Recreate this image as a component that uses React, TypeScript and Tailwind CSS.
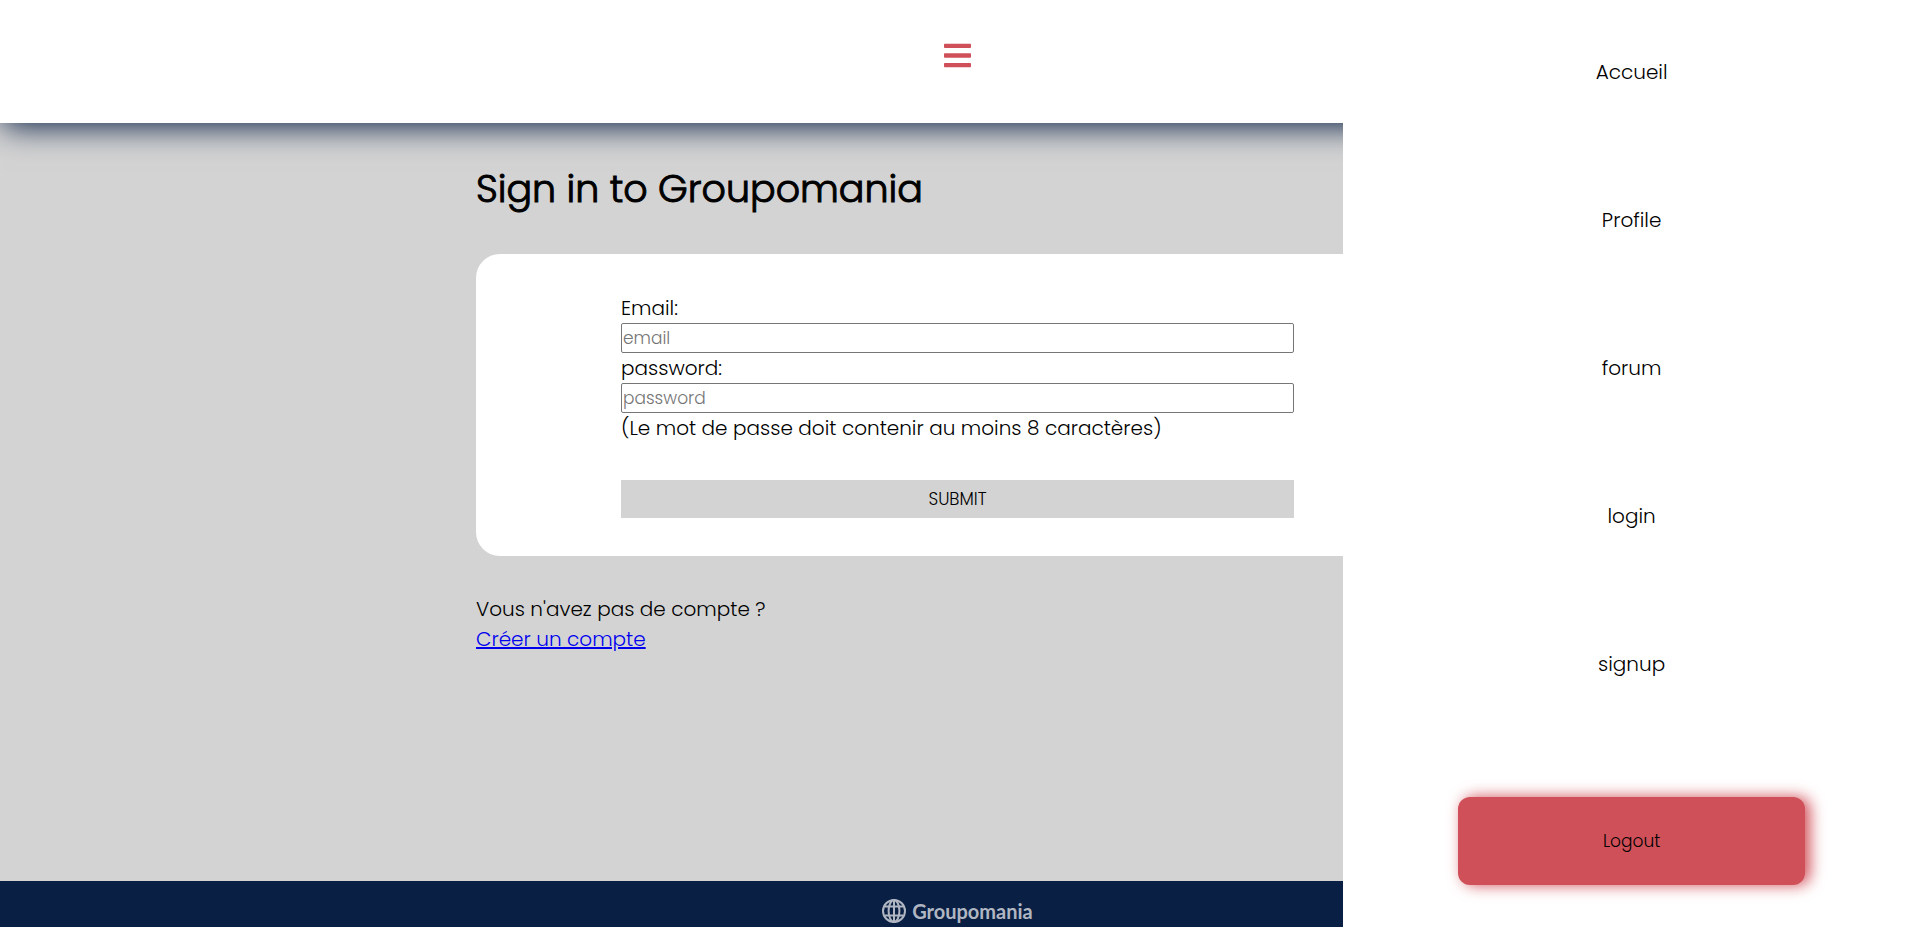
import React, { useState } from "react";

const links = [
  { label: "Accueil", href: "#accueil" },
  { label: "Profile", href: "#profile" },
  { label: "forum", href: "#forum" },
  { label: "login", href: "#login" },
  { label: "signup", href: "#signup" },
];

function BarsIcon() {
  return (
    <svg viewBox="0 0 448 512" className="h-[31px] w-[27px]" fill="currentColor" aria-hidden="true">
      <path d="M16 132h416c8.837 0 16-7.163 16-16V76c0-8.837-7.163-16-16-16H16C7.163 60 0 67.163 0 76v40c0 8.837 7.163 16 16 16zm0 160h416c8.837 0 16-7.163 16-16v-40c0-8.837-7.163-16-16-16H16c-8.837 0-16 7.163-16 16v40c0 8.837 7.163 16 16 16zm0 160h416c8.837 0 16-7.163 16-16v-40c0-8.837-7.163-16-16-16H16c-8.837 0-16 7.163-16 16v40c0 8.837 7.163 16 16 16z" />
    </svg>
  );
}

function GlobeIcon() {
  return (
    <svg viewBox="0 0 24 24" className="size-6" fill="none" stroke="currentColor" strokeWidth="2" aria-hidden="true">
      <circle cx="12" cy="12" r="11" />
      <ellipse cx="12" cy="12" rx="5.4" ry="11" />
      <path d="M12 1v22M2.6 7.5h18.8M2.6 16.5h18.8" />
    </svg>
  );
}

function Header({ onToggle }: { onToggle: () => void }) {
  return (
    <header className="relative flex justify-center bg-white pt-10 pb-[52px] pl-[3px] shadow-[3px_3px_30px_#091f43]">
      <button type="button" aria-label="Menu" onClick={onToggle} className="cursor-pointer text-[#d05059]">
        <BarsIcon />
      </button>
    </header>
  );
}

function SideMenu() {
  return (
    <nav className="fixed inset-y-0 right-0 flex w-[29.75%] flex-col items-center justify-between bg-white pt-[57px] pb-[42px] pl-2">
      {links.map((link) => (
        <a key={link.label} href={link.href} className="text-black">
          {link.label}
        </a>
      ))}
      <button
        type="button"
        className="w-[62%] cursor-pointer rounded-xl bg-[#d05059] py-8 text-[17px] leading-6 text-black shadow-[5px_0_15px_#d05059]"
      >
        Logout
      </button>
    </nav>
  );
}

function SignInForm() {
  const field = "h-[30px] w-full rounded-xs border border-[#767676] bg-white px-px text-[17px] leading-6 placeholder:text-[#757575]";
  return (
    <form className="flex flex-col rounded-3xl bg-white px-[145px] pt-[39px] pb-[38px]" onSubmit={(e) => e.preventDefault()}>
      <label htmlFor="email">Email:</label>
      <input id="email" type="email" placeholder="email" className={field} />
      <label htmlFor="password">password:</label>
      <input id="password" type="password" placeholder="password" className={field} />
      <p>(Le mot de passe doit contenir au moins 8 caractères)</p>
      <button type="submit" className="mt-[37px] h-[38px] cursor-pointer bg-[#d3d3d3] text-[17px] leading-6">
        SUBMIT
      </button>
    </form>
  );
}

export default function App() {
  const [open, setOpen] = useState(true);
  return (
    <div className="flex min-h-screen flex-col bg-[#d3d3d3] font-['Poppins','Inter',sans-serif] text-[20px] leading-[30px] font-light text-black">
      <Header onToggle={() => setOpen(!open)} />
      <main className="mx-auto w-full max-w-[966px] grow pt-9 pl-[3px]">
        <h1 className="mb-[35px] text-[38px] leading-[60px] font-light [-webkit-text-stroke:1px_black]">Sign in to Groupomania</h1>
        <SignInForm />
        <p className="mt-[38px]">Vous n'avez pas de compte ?</p>
        <a href="#signup" className="text-[#0000ee] underline">
          Créer un compte
        </a>
      </main>
      <footer className="flex h-[46px] items-center justify-center gap-1.5 bg-[#091f43] pt-[14px] pl-[3px] text-[#b0b6c2]">
        <GlobeIcon />
        <span className="font-['Lato',sans-serif] text-[20px] leading-6 font-bold">Groupomania</span>
      </footer>
      {open && <SideMenu />}
    </div>
  );
}
